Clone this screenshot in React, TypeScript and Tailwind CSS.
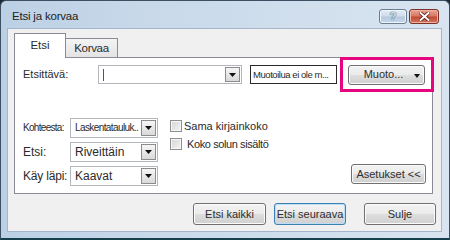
import React from "react";

const Arrow = () => (
  <svg width="7" height="4" viewBox="0 0 7 4">
    <path d="M0 0H7L3.5 4Z" fill="#111" />
  </svg>
);

function Combo({
  className,
  children,
}: {
  className: string;
  children?: React.ReactNode;
}) {
  return (
    <div
      className={
        "flex items-stretch border border-[#b3b6bb] bg-white p-[1px] " +
        className
      }
    >
      <div className="flex flex-1 items-center overflow-hidden whitespace-nowrap pl-[3px]">
        {children}
      </div>
      <div className="flex w-[15px] items-center justify-center border border-[#8a8c90] bg-[linear-gradient(#f6f6f6,#d9d9d9)]">
        <Arrow />
      </div>
    </div>
  );
}

function CheckBox() {
  return (
    <div className="h-[12px] w-[12px] shrink-0 border border-[#8e8f8f] bg-[linear-gradient(135deg,#d4d4d4,#f4f4f4)] shadow-[inset_0_0_0_1px_#f7f7f7]" />
  );
}

const btn =
  "flex items-center justify-center rounded-[3px] border border-[#707070] bg-[linear-gradient(#f3f3f3_0%,#ebebeb_48%,#dddddd_52%,#d0d0d0_100%)] shadow-[inset_0_0_0_1px_#fbfbfb] text-[11px] leading-none text-[#2e2e2e]";

export default function App() {
  return (
    <div className="h-[240px] w-[450px] bg-[#1b2733] font-['Liberation_Sans',Arial,sans-serif] text-[#2b2b2b]">
      <div className="flex h-full w-full flex-col rounded-t-[6px] border border-b-[2px] border-[#3d4f63] border-b-[#16404c] bg-[linear-gradient(to_right,#bcd0e5,#c9d9ea_35%,#d8e4f0)]">
        {/* title bar */}
        <div className="flex h-[27px] shrink-0 items-start">
          <div className="pl-[11px] pt-[10px] text-[11.5px] leading-none tracking-[-0.2px] text-[#222]">
            Etsi ja korvaa
          </div>
          <div className="ml-auto mr-[10px] mt-[8px] flex gap-[2px]">
            <div className="flex h-[15px] w-[28px] items-center justify-center rounded-[3px] border border-[#6c7e92] bg-[linear-gradient(#e3ecf5_0%,#cfdceb_48%,#b5c9de_52%,#c7d8ea_100%)] shadow-[inset_0_0_0_1px_#eef4fa]">
              <span className="text-[11px] font-bold leading-none text-[#dfe6ee] [text-shadow:0_0_1px_#3a4a5c,0_0_1px_#3a4a5c]">
                ?
              </span>
            </div>
            <div className="flex h-[15px] w-[30px] items-center justify-center rounded-[3px] border border-[#7b3126] bg-[linear-gradient(#e8a493_0%,#d77763_48%,#c14a34_52%,#d2735c_100%)] shadow-[inset_0_0_0_1px_#eeb3a5]">
              <svg width="11" height="9" viewBox="0 0 11 9">
                <path
                  d="M1.5 1L9.5 8M9.5 1L1.5 8"
                  stroke="#5a1d14"
                  strokeWidth="3.6"
                  strokeLinecap="square"
                />
                <path
                  d="M1.5 1L9.5 8M9.5 1L1.5 8"
                  stroke="#ffffff"
                  strokeWidth="2"
                  strokeLinecap="square"
                />
              </svg>
            </div>
          </div>
        </div>

        {/* client area */}
        <div className="mb-[6px] ml-[6px] mr-[7px] flex flex-1 flex-col border border-[#a5b6c8] bg-[#f0f0f0] pl-[6px] pr-[5px] pt-[4px]">
          {/* tabs */}
          <div className="flex h-[24px] items-end">
            <div className="relative z-10 -mb-[1px] flex h-[25px] w-[52px] items-center justify-center border border-b-0 border-[#898c95] bg-white pb-[1px] text-[11.5px] leading-none">
              Etsi
            </div>
            <div className="flex h-[19px] w-[52px] items-center justify-center border border-b-0 border-l-0 border-[#898c95] bg-[linear-gradient(#f4f4f4,#e3e3e3)] pt-[1px] text-[11.5px] leading-none tracking-[-0.3px]">
              Korvaa
            </div>
          </div>

          {/* panel */}
          <div className="relative mr-[3px] flex h-[137px] flex-col border border-[#898c95] bg-white pl-[8px] pr-[5px] pt-[7px] pb-[7px]">
            {/* row 1 */}
            <div className="flex h-[19px] items-center">
              <div className="w-[75px] text-[11px] leading-none">Etsittävä:</div>
              <Combo className="h-[19px] w-[144px]">
                <div className="h-[12px] w-[1px] bg-[#555]" />
              </Combo>
              <div className="ml-[8px] flex h-[19px] w-[87px] items-center overflow-hidden whitespace-nowrap border border-[#2a2a2a] pl-[2px] text-[9.5px] leading-none tracking-[-0.45px]">
                Muotoilua ei ole m...
              </div>
              <div className={btn + " relative ml-[11px] h-[20px] w-[77px]"}>
                <span className="pr-[6px]">Muoto...</span>
                <div className="absolute right-[4px] top-[8px]">
                  <svg width="6" height="4" viewBox="0 0 6 4">
                    <path d="M0 0H6L3 4Z" fill="#111" />
                  </svg>
                </div>
              </div>
            </div>

            {/* lower section */}
            <div className="mt-[34px] flex flex-1 items-end">
              <div className="flex flex-col gap-[4px] self-start">
                <div className="flex h-[20px] items-center">
                  <div className="w-[47px] text-[10px] leading-none tracking-[-0.7px]">
                    Kohteesta:
                  </div>
                  <Combo className="h-[20px] w-[88px]">
                    <span className="text-[10px] leading-none tracking-[-0.6px]">
                      Laskentatauluk..
                    </span>
                  </Combo>
                </div>
                <div className="flex h-[20px] items-center">
                  <div className="w-[47px] text-[12px] leading-none">Etsi:</div>
                  <Combo className="h-[20px] w-[88px]">
                    <span className="text-[12px] leading-none">Riveittäin</span>
                  </Combo>
                </div>
                <div className="flex h-[20px] items-center">
                  <div className="w-[47px] text-[12px] leading-none tracking-[-0.2px]">
                    Käy läpi:
                  </div>
                  <Combo className="h-[20px] w-[88px]">
                    <span className="text-[12px] leading-none">Kaavat</span>
                  </Combo>
                </div>
              </div>

              <div className="ml-[12px] flex flex-col gap-[6px] self-start pt-[2px]">
                <div className="flex items-center gap-[2px]">
                  <CheckBox />
                  <span className="text-[11px] leading-none">Sama kirjainkoko</span>
                </div>
                <div className="flex items-center gap-[5px]">
                  <CheckBox />
                  <span className="text-[11px] leading-none tracking-[-0.4px]">
                    Koko solun sisältö
                  </span>
                </div>
              </div>

              <div className={btn + " mb-[2px] ml-auto mr-[1px] h-[20px] w-[75px]"}>
                Asetukset &lt;&lt;
              </div>
            </div>

            {/* highlight annotation */}
            <div className="absolute left-[325px] top-[-1px] h-[35px] w-[94px] border-[3px] border-[#e5067f]" />
          </div>

          {/* bottom buttons */}
          <div className="mt-[9px] flex h-[22px] justify-end">
            <div className={btn + " h-[22px] w-[73px]"}>Etsi kaikki</div>
            <div className="ml-[8px] flex h-[22px] w-[72px] items-center justify-center rounded-[3px] border border-[#3c7fb1] bg-[linear-gradient(#f3f3f3_0%,#ebebeb_48%,#dddddd_52%,#d0d0d0_100%)] text-[11px] leading-none text-[#2e2e2e] shadow-[inset_0_0_0_1px_#b9def5]">
              Etsi seuraava
            </div>
            <div className={btn + " ml-[18px] h-[22px] w-[72px]"}>Sulje</div>
          </div>
        </div>
      </div>
    </div>
  );
}
